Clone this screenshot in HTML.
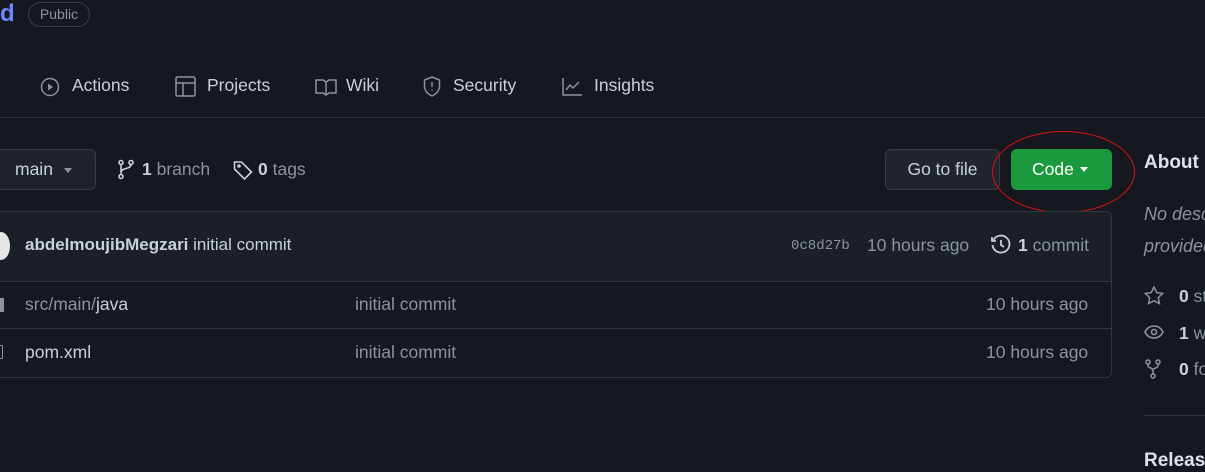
<!DOCTYPE html>
<html><head><meta charset="utf-8"><style>
*{margin:0;padding:0;box-sizing:border-box}
body{width:1205px;height:471px;background:#15181f;font-family:"Liberation Sans",sans-serif;color:#c9d1d9;position:relative;overflow:hidden;font-size:17.5px}
.a{position:absolute;white-space:nowrap}
.m{color:#8b949e}
svg{position:absolute}
</style></head><body>
<div class="a" style="left:0;top:0;font-size:24px;font-weight:bold;color:#6e86ff;line-height:28px">d</div>
<div class="a" style="left:28px;top:2px;width:62px;height:25px;border:1px solid #3a3f47;border-radius:13px;font-size:14px;color:#8b949e;text-align:center;line-height:23px">Public</div>

<svg style="left:40px;top:77px" width="20" height="20" viewBox="0 0 20 20" fill="none" stroke="#8b949e" stroke-width="1.5"><circle cx="10" cy="10" r="8.5"/><path d="M8 6.5v7l5-3.5z" fill="#8b949e" stroke="none"/></svg>
<div class="a" style="left:72px;top:75px">Actions</div>
<svg style="left:175px;top:76px" width="21" height="21" viewBox="0 0 21 21" fill="none" stroke="#8b949e" stroke-width="1.5"><rect x="1" y="1" width="19" height="19" rx="1.5"/><path d="M1 7h19M8 7v13"/></svg>
<div class="a" style="left:207px;top:75px">Projects</div>
<svg style="left:315px;top:78px" width="22" height="18" viewBox="0 0 22 18" fill="none" stroke="#8b949e" stroke-width="1.5"><path d="M1 2h7l3 2 3-2h7v13h-7l-3 2-3-2H1z M11 4v13"/></svg>
<div class="a" style="left:346px;top:75px">Wiki</div>
<svg style="left:423px;top:76px" width="18" height="21" viewBox="0 0 18 21" fill="none" stroke="#8b949e" stroke-width="1.5"><path d="M9 1l7.5 3v6c0 5-3.5 8-7.5 10C5 18 1.5 15 1.5 10V4z"/><path d="M9 6v5M9 13.5v1"/></svg>
<div class="a" style="left:453px;top:75px">Security</div>
<svg style="left:562px;top:77px" width="21" height="19" viewBox="0 0 21 19" fill="none" stroke="#8b949e" stroke-width="1.5"><path d="M1 1v17h19M4 13l4-5 3 3 6-6"/></svg>
<div class="a" style="left:594px;top:75px">Insights</div>
<div class="a" style="left:0;top:117px;width:1205px;height:1px;background:#2b3038"></div>

<div class="a" style="left:-10px;top:149px;width:106px;height:41px;border:1px solid #363b44;border-radius:6px;background:#1e2229"></div>
<svg style="left:-6px;top:160px" width="10" height="20" viewBox="0 0 10 20" fill="none" stroke="#8b949e" stroke-width="1.5"><path d="M4 2c0 5-4 3-4 8"/></svg>
<div class="a" style="left:15px;top:159px">main</div>
<div class="a" style="left:64px;top:168px;border:4px solid transparent;border-top:5px solid #8b949e"></div>
<svg style="left:117px;top:159px" width="18" height="21" viewBox="0 0 18 21" fill="none" stroke="#c9d1d9" stroke-width="1.6"><circle cx="4" cy="3.5" r="2"/><circle cx="4" cy="17.5" r="2"/><circle cx="14" cy="3.5" r="2"/><path d="M4 5.5v10M14 5.5c0 5-10 3-10 8"/></svg>
<div class="a" style="left:142px;top:159px"><b>1</b> <span class="m">branch</span></div>
<svg style="left:233px;top:160px" width="21" height="21" viewBox="0 0 21 21" fill="none" stroke="#c9d1d9" stroke-width="1.6"><path d="M1.5 2v7l10 10 7-7-10-10z"/><circle cx="6" cy="6" r="1"/></svg>
<div class="a" style="left:258px;top:159px"><b>0</b> <span class="m">tags</span></div>

<div class="a" style="left:885px;top:149px;width:115px;height:41px;border:1px solid #363b44;border-radius:6px;background:#21262d;text-align:center;line-height:39px">Go to file</div>
<div class="a" style="left:1011px;top:149px;width:101px;height:41px;border-radius:6px;background:#1a9a3c;color:#fff;line-height:41px;padding-left:21px">Code</div>
<div class="a" style="left:1080px;top:167px;border:4px solid transparent;border-top:5px solid #fff"></div>
<div class="a" style="left:992px;top:131px;width:143px;height:82px;border:1.3px solid #e01010;border-radius:50%"></div>

<div class="a" style="left:-10px;top:211px;width:1122px;height:167px;border:1px solid #30353e;border-radius:6px;overflow:hidden">
 <div style="height:70px;background:#1b1f27;border-bottom:1px solid #30353e"></div>
 <div style="height:47px;border-bottom:1px solid #30353e"></div>
</div>
<div class="a" style="left:-8px;top:232px;width:18px;height:28px;border-radius:50%;background:#e6e6e6"></div>
<div class="a" style="left:25px;top:235px;font-size:17px"><b>abdelmoujibMegzari</b> initial commit</div>
<div class="a" style="left:791px;top:238px;font-family:'Liberation Mono',monospace;font-size:14px;color:#8b949e">0c8d27b</div>
<div class="a m" style="left:867px;top:235px">10 hours ago</div>
<svg style="left:990px;top:234px" width="22" height="22" viewBox="0 0 22 22" fill="none" stroke="#c9d1d9" stroke-width="1.8"><path d="M3.5 6A8.5 8.5 0 1 1 2.5 11"/><path d="M2 3v4h4M11 6v5l3 2"/></svg>
<div class="a" style="left:1018px;top:235px"><b>1</b> <span class="m">commit</span></div>

<div class="a" style="left:-4px;top:298px;width:8px;height:14px;background:#8b949e;border-radius:1px"></div>
<div class="a" style="left:25px;top:294px"><span class="m">src/main/</span>java</div>
<div class="a m" style="left:355px;top:294px">initial commit</div>
<div class="a m" style="left:986px;top:294px">10 hours ago</div>
<div class="a" style="left:-4px;top:345px;width:7px;height:14px;border:1.5px solid #8b949e;border-radius:1px"></div>
<div class="a" style="left:25px;top:342px">pom.xml</div>
<div class="a m" style="left:355px;top:342px">initial commit</div>
<div class="a m" style="left:986px;top:342px">10 hours ago</div>

<div class="a" style="left:1144px;top:152px;font-size:19px;font-weight:bold;color:#dfe3e8">About</div>
<div class="a m" style="left:1144px;top:198px;font-style:italic;font-size:18px;line-height:32px">No description<br>provided</div>
<svg style="left:1144px;top:286px" width="20" height="19" viewBox="0 0 20 19" fill="none" stroke="#8b949e" stroke-width="1.5"><path d="M10 1l2.7 5.6 6 .8-4.4 4.2 1.1 6L10 14.7l-5.4 2.9 1.1-6L1.3 7.4l6-.8z"/></svg>
<div class="a" style="left:1179px;top:286px"><b>0</b> <span class="m">stars</span></div>
<svg style="left:1144px;top:324px" width="20" height="16" viewBox="0 0 20 16" fill="none" stroke="#8b949e" stroke-width="1.6"><path d="M1 8c2-4 5-6 9-6s7 2 9 6c-2 4-5 6-9 6s-7-2-9-6z"/><circle cx="10" cy="8" r="2.5"/></svg>
<div class="a" style="left:1179px;top:323px"><b>1</b> <span class="m">watching</span></div>
<svg style="left:1145px;top:359px" width="16" height="20" viewBox="0 0 16 20" fill="none" stroke="#8b949e" stroke-width="1.5"><circle cx="3" cy="3" r="2"/><circle cx="13" cy="3" r="2"/><circle cx="8" cy="17" r="2"/><path d="M3 5v2c0 2 5 2 5 4v4M13 5v2c0 2-5 2-5 4"/></svg>
<div class="a" style="left:1179px;top:359px"><b>0</b> <span class="m">forks</span></div>
<div class="a" style="left:1144px;top:415px;width:61px;height:1px;background:#30353e"></div>
<div class="a" style="left:1144px;top:450px;font-size:19px;font-weight:bold;color:#dfe3e8">Releases</div>
</body></html>
